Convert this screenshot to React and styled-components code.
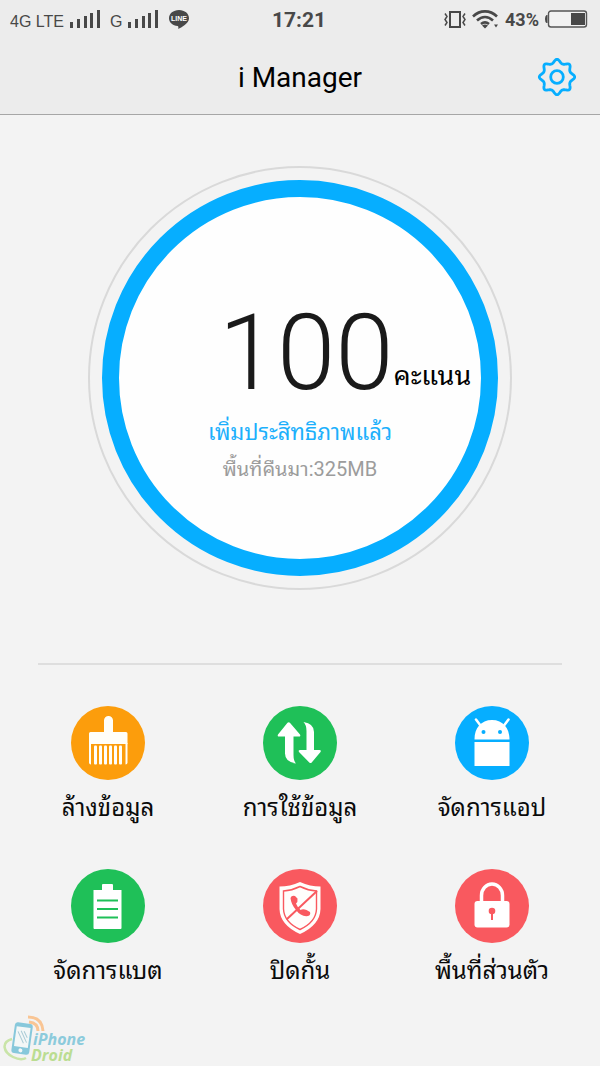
import React from "react";
import styled, { createGlobalStyle } from "styled-components";

const GlobalStyle = createGlobalStyle`
  *, *::before, *::after { box-sizing: border-box; }
  body {
    margin: 0;
    background: #f3f3f3;
    color: #000;
    font-family: Roboto, "Noto Sans Thai Looped", "Noto Looped Thai", "Droid Sans Thai", Loma, Waree, Garuda, "Noto Sans Thai", "Noto Sans", sans-serif;
  }
`;

const Screen = styled.div`
  min-height: 100vh;
  display: flex;
  flex-direction: column;
`;

const Header = styled.header`
  background: #ececec;
  border-bottom: 1px solid #a6a6a6;
`;

const StatusBar = styled.div`
  display: grid;
  grid-template-columns: 1fr auto 1fr;
  align-items: center;
  height: 40px;
  padding: 0 12px 0 10px;
  color: #484848;
`;

const StatusGroup = styled.div`
  display: flex;
  align-items: center;
  justify-content: ${(p) => (p.$end ? "flex-end" : "flex-start")};
  gap: ${(p) => (p.$end ? "6px" : "9px")};
`;

const Network = styled.span`
  display: flex;
  align-items: flex-end;
  gap: 6px;
  font: 16px/16px "Liberation Sans", sans-serif;
`;

const Clock = styled.time`
  font-size: 21px;
  line-height: 24px;
  font-weight: 700;
`;

const Percent = styled.span`
  font-size: 18px;
  line-height: 24px;
  font-weight: 700;
`;

const TitleBar = styled.div`
  display: grid;
  grid-template-columns: 1fr auto 1fr;
  align-items: center;
  height: 74px;
  padding: 0 23px;
`;

const Title = styled.h1`
  grid-column: 2;
  margin: 0;
  padding-top: 2px;
  font-size: 28px;
  line-height: 36px;
  font-weight: 400;
`;

const IconButton = styled.button`
  justify-self: end;
  display: flex;
  padding: 0;
  border: 0;
  background: none;
  cursor: pointer;
`;

const Main = styled.main`
  flex: 1;
  padding: 51px 12px 0;
`;

const Dial = styled.section`
  display: flex;
  width: 424px;
  max-width: 100%;
  aspect-ratio: 1;
  margin: 0 auto;
  padding: 12px;
  border: 2px solid #d9d9d9;
  border-radius: 50%;
`;

const Ring = styled.div`
  flex: 1;
  display: flex;
  flex-direction: column;
  align-items: center;
  padding-top: 97px;
  border: 17px solid #06aeff;
  border-radius: 50%;
  background: #fefefe;
`;

const Score = styled.div`
  display: flex;
  align-items: flex-end;
  padding-left: 90px;
`;

const ScoreValue = styled.span`
  font-size: 105px;
  line-height: 120px;
  font-weight: 300;
  color: #1a1a1a;
`;

const ScoreUnit = styled.span`
  padding-bottom: 20px;
  font-size: 27px;
  line-height: 36px;
`;

const Status = styled.p`
  margin: 0;
  font-size: ${(p) => (p.$muted ? "20px" : "22px")};
  line-height: 37px;
  color: ${(p) => (p.$muted ? "#9c9c9c" : "#1cb0fc")};
`;

const Divider = styled.hr`
  height: 2px;
  margin: 73px 26px 41px;
  border: 0;
  background: #dedede;
`;

const Tools = styled.nav`
  display: grid;
  grid-template-columns: repeat(3, 1fr);
  row-gap: 43px;
`;

const Tool = styled.a`
  display: flex;
  flex-direction: column;
  align-items: center;
  gap: 10px;
  color: #0a0a0a;
  text-decoration: none;
  font-size: 24px;
  line-height: 36px;
  white-space: nowrap;
`;

const Badge = styled.span`
  display: flex;
  width: 74px;
  height: 74px;
  border-radius: 50%;
  background: ${(p) => p.$color};
`;

const Footer = styled.footer`
  height: 52px;
  padding-left: 3px;
  display: flex;
`;

const Brand = styled.div`
  display: flex;
  font: italic 700 16px/16px "Open Sans", sans-serif;
  color: #8ccbdc;
`;

const BrandName = styled.span`
  display: flex;
  flex-direction: column;
  padding-top: 17px;
  margin-left: -14px;
`;

const BrandAccent = styled.span`
  color: #bbdd92;
  margin-left: -2px;
`;

const Signal = () => (
  <svg width="31" height="20" fill="#484848" aria-hidden="true">
    <rect x="0" y="12" width="3" height="6" />
    <rect x="7" y="9" width="3" height="9" />
    <rect x="14" y="6" width="3" height="12" />
    <rect x="20" y="3" width="3" height="15" />
    <rect x="27" y="0" width="3" height="18" />
  </svg>
);

const LineLogo = () => (
  <svg width="22" height="22" viewBox="0 0 22 22" aria-label="LINE">
    <path d="M11 1C5.300 1 1 4.600 1 9.200c0 4.200 3.700 7.300 8.600 7.900.9.200.8 1.300.7 2.900 3-1.500 10.700-5.500 10.700-10.800C21 4.600 16.700 1 11 1z" fill="#484848" />
    <text x="11" y="12" textAnchor="middle" fontSize="7" fontWeight="700" fontFamily="Liberation Sans, sans-serif" fill="#fff">LINE</text>
  </svg>
);

const Vibrate = () => (
  <svg width="22" height="20" fill="none" stroke="#484848" aria-hidden="true">
    <rect x="6" y="2" width="10" height="15" strokeWidth="2" />
    <path d="M1 3.500l2 3-2 3 2 3-2 3M21 3.500l-2 3 2 3-2 3 2 3" strokeWidth="1.500" />
  </svg>
);

const Wifi = () => (
  <svg width="27" height="20" fill="none" stroke="#484848" strokeWidth="2.600" aria-hidden="true">
    <path d="M1 6.500C8-.3 18-.3 25 6.500M5 10.500c5-4.600 11-4.600 16 0M9 14c2.600-2.100 5.400-2.100 8 0" />
    <path d="M10 15.500c2-1.200 4-1.200 6 0l-3 3zM22 14.500h4l-2 3z" fill="#484848" stroke="none" />
  </svg>
);

const Battery = () => (
  <svg width="43" height="20" aria-hidden="true">
    <path d="M2.500 5H1.500Q0 6 0 9t1.500 4h1z" fill="#484848" />
    <rect x="3.500" y="1" width="38" height="16" rx="2.500" fill="#f2f2f2" stroke="#555" strokeWidth="1.400" />
    <rect x="26" y="3" width="14" height="12" fill="#484848" />
  </svg>
);

const gearPath = Array.from({ length: 144 }, (_, i) => {
  const a = (i / 144) * Math.PI * 2;
  const wave = Math.cos(8 * a);
  const r = 15.7 + 1.8 * wave + 0.2 * Math.cos(16 * a);
  return `${i ? "L" : "M"}${(20 + r * Math.sin(a)).toFixed(2)} ${(20 - r * Math.cos(a)).toFixed(2)}`;
}).join("") + "Z";

const Gear = () => (
  <svg width="40" height="40" viewBox="0 0 40 40" fill="none" stroke="#06aeff" strokeWidth="2.800" strokeLinejoin="round" aria-hidden="true">
    <path d={gearPath} />
    <circle cx="20" cy="20" r="6.300" />
  </svg>
);

const Brush = () => (
  <g fill="#fffef8">
    <path d="M18 27.500q0-1.500 1.500-1.500H33V14.500a4.500 4.500 0 0 1 9 0V26h13q1.500 0 1.500 1.500V38H18z" />
    <path d="M18 37h2v21.500q-2 0-2-2zM54.500 37h2v19.500q0 2-2 2z" />
    {[23, 28, 33, 38, 43, 48].map((x) => (
      <rect key={x} x={x} y="39.500" width="3" height="19" rx="1" />
    ))}
  </g>
);

const Transfer = () => (
  <g fill="#fff">
    <path d="M24.500 16.800q1.200-1.200 2.400 0L37 28.500q1 2-1 2h-5.500V49q0 6 2.500 8.500-11-1.500-11-10V30.500h-6q-2 0-1-2z" />
    <path d="M40.500 16q10.500 1.500 10.500 10v18h5.500q2 0 1 2L48.700 56.500q-1.200 1.200-2.400 0L36 46q-1-2 1-2h6.500V25q0-6-3-9z" />
  </g>
);

const Robot = () => (
  <g>
    <path d="M19.500 33.500C19.500 22 26 14 37 14s17.500 8 17.500 19.500zM19.500 36h35v24h-35z" fill="#fff" />
    <path d="M21 13.500l4.500 6M53.500 13.500l-4.500 6" stroke="#fff" strokeWidth="2.500" strokeLinecap="round" />
    <circle cx="28.500" cy="26" r="2" fill="#06aeff" />
    <circle cx="45" cy="26" r="2" fill="#06aeff" />
  </g>
);

const BatteryCell = () => (
  <g>
    <path d="M22.500 21H31v-5q0-1 1-1h9q1 0 1 1v5h8.500v38q0 1-1 1h-26q-1 0-1-1z" fill="#fff" />
    <path d="M26 31.500h21M26 40h21M26 48.500h21" stroke="#1fc058" strokeWidth="2" />
  </g>
);

const Shield = () => (
  <g>
    <path d="M37 13Q47 17.500 57.500 17.500V40Q57 56 37 65 17 56 16.500 40V17.500Q27 17.500 37 13z" fill="#fffefc" />
    <path d="M37 17.500Q45 21.500 53.500 22V40Q53 53 37 60.500 21 53 20.500 40V22Q29 21.500 37 17.500z" fill="none" stroke="#f9595f" strokeWidth="1.400" />
    <path d="M23.500 50.500L54 22" stroke="#f9595f" strokeWidth="2" />
    <path d="M27.500 29q1-3 4.500-2l2.500 2.500q.5 3.500-1.500 5 1.500 4 4.500 6.500 2.500-1.500 6 0l3.500 2q1 3-2 4-7 1-12-6-5-6-5.500-12z" fill="#f9595f" />
  </g>
);

const Lock = () => (
  <g>
    <path d="M26.500 34V26.500a10.500 11.500 0 0 1 21 0V34" fill="none" stroke="#fff" strokeWidth="3.500" />
    <rect x="19.500" y="32" width="35" height="26.500" rx="3" fill="#fff" />
    <circle cx="37" cy="42" r="3.300" fill="#f9595f" />
    <path d="M37 42v9" stroke="#f9595f" strokeWidth="2" />
  </g>
);

const PhoneLogo = () => (
  <svg width="44" height="52" fill="none" aria-hidden="true">
    <path d="M9 25C-2 28 0 38 10 43q8 4 13 1" stroke="#c9e4a8" strokeWidth="2.500" />
    <path d="M26 8q9 1 9 9M25 3q14 0 15 14" stroke="#f9c594" strokeWidth="3" />
    <g transform="rotate(8 19 25)">
      <rect x="10" y="9" width="18" height="31" rx="3" fill="#87c8db" />
      <rect x="12" y="13" width="14" height="20" fill="#f3f7f7" />
      <path d="M14 18l7 11M17 17l7 11M20 17l4 6" stroke="#aacbd5" />
      <circle cx="19" cy="36.500" r="2" fill="#f3f7f7" />
    </g>
  </svg>
);

const tools = [
  { label: "ล้างข้อมูล", color: "#fc9d0c", Icon: Brush },
  { label: "การใช้ข้อมูล", color: "#1fc058", Icon: Transfer },
  { label: "จัดการแอป", color: "#06aeff", Icon: Robot },
  { label: "จัดการแบต", color: "#1fc058", Icon: BatteryCell },
  { label: "ปิดกั้น", color: "#f9595f", Icon: Shield },
  { label: "พื้นที่ส่วนตัว", color: "#f9595f", Icon: Lock },
];

export default function App() {
  return (
    <Screen>
      <GlobalStyle />
      <Header>
        <StatusBar>
          <StatusGroup>
            <Network>4G LTE<Signal /></Network>
            <Network>G<Signal /></Network>
            <LineLogo />
          </StatusGroup>
          <Clock>17:21</Clock>
          <StatusGroup $end>
            <Vibrate />
            <Wifi />
            <Percent>43%</Percent>
            <Battery />
          </StatusGroup>
        </StatusBar>
        <TitleBar>
          <Title>i Manager</Title>
          <IconButton type="button" aria-label="Settings"><Gear /></IconButton>
        </TitleBar>
      </Header>
      <Main>
        <Dial>
          <Ring>
            <Score>
              <ScoreValue>100</ScoreValue>
              <ScoreUnit>คะแนน</ScoreUnit>
            </Score>
            <Status>เพิ่มประสิทธิภาพแล้ว</Status>
            <Status $muted>พื้นที่คืนมา:325MB</Status>
          </Ring>
        </Dial>
        <Divider />
        <Tools>
          {tools.map(({ label, color, Icon }) => (
            <Tool key={label} href="#">
              <Badge $color={color}>
                <svg width="74" height="74" viewBox="0 0 74 74" fill="none" aria-hidden="true"><Icon /></svg>
              </Badge>
              {label}
            </Tool>
          ))}
        </Tools>
      </Main>
      <Footer>
        <Brand>
          <PhoneLogo />
          <BrandName>
            <span>iPhone</span>
            <BrandAccent>Droid</BrandAccent>
          </BrandName>
        </Brand>
      </Footer>
    </Screen>
  );
}
